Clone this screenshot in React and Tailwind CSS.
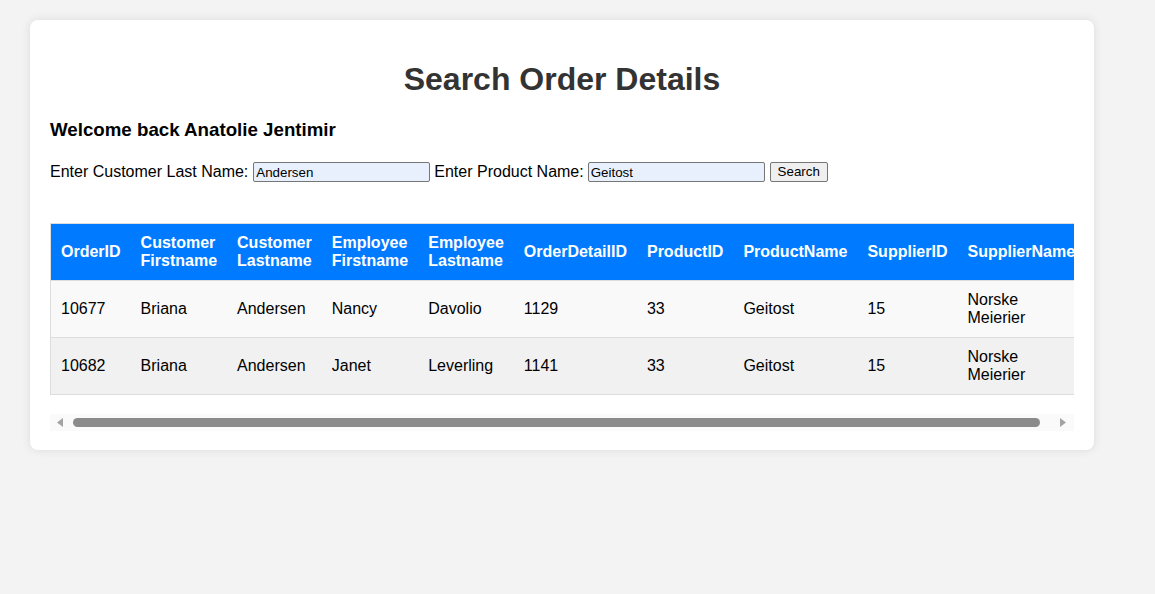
import { useState } from 'react';

const rows = [
  { orderId: 10677, custFirst: 'Briana', custLast: 'Andersen', empFirst: 'Nancy', empLast: 'Davolio', detailId: 1129, productId: 33, productName: 'Geitost', supplierId: 15, supplierName: 'Norske Meierier' },
  { orderId: 10682, custFirst: 'Briana', custLast: 'Andersen', empFirst: 'Janet', empLast: 'Leverling', detailId: 1141, productId: 33, productName: 'Geitost', supplierId: 15, supplierName: 'Norske Meierier' },
];

const headers = [
  'OrderID',
  'Customer Firstname',
  'Customer Lastname',
  'Employee Firstname',
  'Employee Lastname',
  'OrderDetailID',
  'ProductID',
  'ProductName',
  'SupplierID',
  'SupplierName',
];

export default function App() {
  const [lastName, setLastName] = useState('Andersen');
  const [product, setProduct] = useState('Geitost');

  return (
    <div className="min-h-[594px] bg-[#f3f3f3] pt-[20px] font-['Liberation_Sans',Arial,sans-serif]">
      <div className="ml-[30px] w-[1064px] bg-white rounded-[8px] shadow-[0_0_10px_rgba(0,0,0,0.1)] px-[20px] pt-[20px] pb-[19px]">
        <h1 className="mt-[21px] mb-[21px] text-center text-[32px] leading-[37px] font-bold text-[#333]">
          Search Order Details
        </h1>
        <h3 className="mb-[21px] text-[18.72px] leading-[21.5px] font-bold text-black">
          Welcome back Anatolie Jentimir
        </h3>

        {/* Search form */}
        <form className="flex items-center h-[20px] text-[16px] text-black" onSubmit={e => e.preventDefault()}>
          <span>Enter Customer Last Name:</span>
          <input
            value={lastName}
            onChange={e => setLastName(e.target.value)}
            className="ml-[5px] w-[177px] h-[20px] px-[2px] pt-[1px] bg-[#e8f0fe] border border-[#767676] rounded-[2px] text-[13.33px] text-black outline-none"
          />
          <span className="ml-[4px]">Enter Product Name:</span>
          <input
            value={product}
            onChange={e => setProduct(e.target.value)}
            className="ml-[4px] w-[177px] h-[20px] px-[2px] pt-[1px] bg-[#e8f0fe] border border-[#767676] rounded-[2px] text-[13.33px] text-black outline-none"
          />
          <button className="ml-[5px] w-[58px] h-[20px] bg-[#efefef] border border-[#767676] rounded-[2px] text-[13.33px] text-black leading-none">
            Search
          </button>
        </form>

        {/* Results table */}
        <div className="mt-[41px] overflow-hidden">
          <table className="w-full border-collapse border border-[#ddd] text-[16px] leading-[18px]">
            <thead>
              <tr className="bg-[#007bff] text-white">
                {headers.map(h => (
                  <th key={h} className="px-[10px] py-[10px] text-left font-bold border-b border-[#ddd]">
                    {h}
                  </th>
                ))}
              </tr>
            </thead>
            <tbody>
              {rows.map((r, i) => (
                <tr key={r.orderId} className={i % 2 === 0 ? 'bg-[#f9f9f9]' : 'bg-[#f1f1f1]'}>
                  {[r.orderId, r.custFirst, r.custLast, r.empFirst, r.empLast, r.detailId, r.productId, r.productName, r.supplierId, r.supplierName].map((v, j) => (
                    <td key={j} className="px-[10px] h-[57px] text-left text-black border-b border-[#ddd]">
                      {v}
                    </td>
                  ))}
                </tr>
              ))}
            </tbody>
          </table>
        </div>

        {/* Horizontal scrollbar */}
        <div className="mt-[19px] h-[17px] bg-[#fafafa] flex items-center">
          <svg className="ml-[6px]" width="8" height="9" viewBox="0 0 8 9">
            <polygon points="7,0 7,9 1,4.5" fill="#a3a3a3" />
          </svg>
          <div className="ml-[9px] w-[967px] h-[9px] rounded-full bg-[#8b8b8b]" />
          <svg className="ml-[19px]" width="8" height="9" viewBox="0 0 8 9">
            <polygon points="1,0 1,9 7,4.5" fill="#a3a3a3" />
          </svg>
        </div>
      </div>
    </div>
  );
}
